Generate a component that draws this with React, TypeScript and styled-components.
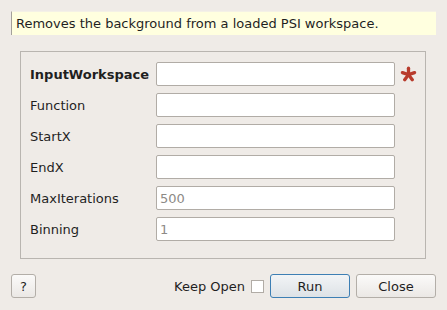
import React from "react";
import styled, { createGlobalStyle } from "styled-components";

const Global = createGlobalStyle`
  html, body { margin: 0; padding: 0; background: #efebe7; }
  body { font-family: "DejaVu Sans", "Liberation Sans", sans-serif; font-size: 13px; color: #1f1f1f; }
`;

const Dialog = styled.div`
  width: 447px;
  height: 310px;
  box-sizing: border-box;
  padding: 11px 11px 0 11px;
  display: flex;
  flex-direction: column;
  background: #efebe7;
`;

const Description = styled.div`
  height: 24px;
  box-sizing: border-box;
  background: #ffffdf;
  border-left: 1px solid #a3a09b;
  border-top: 1px solid #f4f1e6;
  padding-left: 4px;
  display: flex;
  align-items: center;
  white-space: nowrap;
`;

const GroupBox = styled.div`
  margin: 16px 10px 0 9px;
  height: 208px;
  box-sizing: border-box;
  border: 1px solid #b9b5b0;
  padding: 10px 0 0 9px;
  display: grid;
  grid-template-columns: 126px 239px 22px;
  grid-auto-rows: 24px;
  row-gap: 7px;
  align-items: center;
`;

const Label = styled.div<{ $bold?: boolean }>`
  font-weight: ${(p) => (p.$bold ? "bold" : "normal")};
  white-space: nowrap;
`;

const Input = styled.div<{ $placeholder?: boolean }>`
  height: 24px;
  box-sizing: border-box;
  background: #ffffff;
  border: 1px solid #b1aca6;
  border-radius: 2px;
  padding-left: 3px;
  display: flex;
  align-items: center;
  color: ${(p) => (p.$placeholder ? "#8d8a86" : "#1f1f1f")};
`;

const Marker = styled.div`
  display: flex;
  align-items: center;
  justify-content: flex-end;
  height: 24px;
`;

const Footer = styled.div`
  margin-top: 15px;
  display: flex;
  align-items: center;
  height: 24px;
`;

const Button = styled.button<{ $primary?: boolean; $width: number }>`
  width: ${(p) => p.$width}px;
  height: 24px;
  box-sizing: border-box;
  font-family: inherit;
  font-size: 13px;
  color: #1f1f1f;
  padding: 0;
  border-radius: 3px;
  border: 1px solid ${(p) => (p.$primary ? "#3d7fb4" : "#b3aea8")};
  background: ${(p) =>
    p.$primary
      ? "linear-gradient(#f2f4f6, #dde2e6)"
      : "linear-gradient(#fbfaf9, #ebe8e5)"};
`;

const Spacer = styled.div`
  flex: 1;
`;

const KeepOpen = styled.label`
  display: flex;
  align-items: center;
  gap: 6px;
  margin-right: 6px;
`;

const Check = styled.span`
  width: 13px;
  height: 13px;
  box-sizing: border-box;
  background: #fff;
  border: 1px solid #b1aca6;
  display: inline-block;
`;

const ButtonGroup = styled.div`
  display: flex;
  gap: 6px;
`;

const Asterisk = () => (
  <svg width="17" height="16" viewBox="0 0 17 16">
    <g stroke="#b83b2c" strokeWidth="3.3" strokeLinecap="round" transform="translate(8.5 8.6)">
      {[-90, -18, 54, 126, 198].map((a) => {
        const r = (a * Math.PI) / 180;
        return <line key={a} x1={0} y1={0} x2={6.4 * Math.cos(r)} y2={6.4 * Math.sin(r)} />;
      })}
    </g>
  </svg>
);

const rows: { label: string; bold?: boolean; value?: string; required?: boolean }[] = [
  { label: "InputWorkspace", bold: true, required: true },
  { label: "Function" },
  { label: "StartX" },
  { label: "EndX" },
  { label: "MaxIterations", value: "500" },
  { label: "Binning", value: "1" },
];

export default function App() {
  return (
    <>
      <Global />
      <Dialog>
        <Description>Removes the background from a loaded PSI workspace.</Description>
        <GroupBox>
          {rows.map((r) => (
            <React.Fragment key={r.label}>
              <Label $bold={r.bold}>{r.label}</Label>
              <Input $placeholder={!!r.value}>{r.value ?? ""}</Input>
              <Marker>{r.required ? <Asterisk /> : null}</Marker>
            </React.Fragment>
          ))}
        </GroupBox>
        <Footer>
          <Button $width={25}>?</Button>
          <Spacer />
          <KeepOpen>
            Keep Open <Check />
          </KeepOpen>
          <ButtonGroup>
            <Button $primary $width={80}>Run</Button>
            <Button $width={80}>Close</Button>
          </ButtonGroup>
        </Footer>
      </Dialog>
    </>
  );
}
